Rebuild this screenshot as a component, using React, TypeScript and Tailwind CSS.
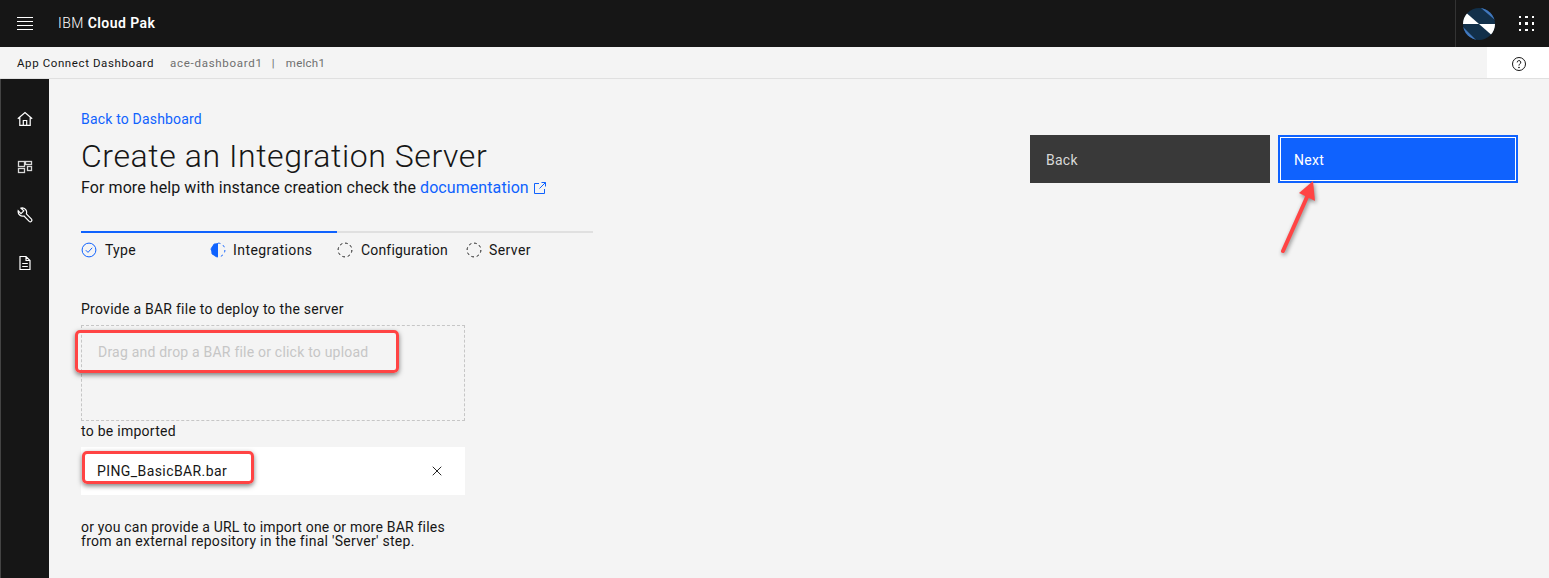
import React from "react";
import { X as XIcon } from "lucide-react";

const font = { fontFamily: "Roboto, sans-serif" };

const HomeIcon = () => (
  <svg width="16" height="16" viewBox="0 0 16 16" fill="none" stroke="white" strokeWidth="1.2">
    <path d="M0.8 7.8 8 1.5l7.2 6.3M2.8 6.4v8h10.4v-8M6.3 14.4V9.5h3.4v4.9" />
  </svg>
);

const DashIcon = () => (
  <svg width="16" height="16" viewBox="0 0 16 16" fill="none" stroke="#d8d8d8" strokeWidth="1.3">
    <rect x="1.5" y="2.5" width="6" height="5" />
    <rect x="8.5" y="2.5" width="6" height="3" />
    <rect x="1.5" y="9.5" width="6" height="4" />
    <rect x="10.5" y="7.5" width="4" height="4" />
  </svg>
);

const WrenchIcon = () => (
  <svg width="16" height="16" viewBox="0 0 16 16" fill="none" stroke="white" strokeWidth="1.2">
    <path d="M5.5 0.8a4.6 4.6 0 0 0-1.5.3L6.8 3.8 4 6.6 1.2 3.8A4.6 4.6 0 0 0 7 9l5.2 5.4a1.6 1.6 0 0 0 2.3-2.2L9.4 6.8A4.6 4.6 0 0 0 5.5 0.8Z" />
  </svg>
);

const DocIcon = () => (
  <svg width="16" height="16" viewBox="0 0 16 16" fill="none" stroke="white" strokeWidth="1.2">
    <path d="M3 1.5h6l4 4v9H3zM9 1.5v4h4M5.2 8.5h5.6M5.2 11.5h5.6" />
  </svg>
);

const DashedCircle = () => (
  <svg width="16" height="16" viewBox="0 0 16 16" fill="none" stroke="#161616" strokeWidth="1">
    <circle cx="8" cy="8" r="6.9" strokeDasharray="2.6 2.8" />
  </svg>
);

const Logo = () => (
  <svg width="32" height="32" viewBox="0 0 32 32">
    <defs>
      <clipPath id="logoClip">
        <circle cx="16" cy="16" r="16" />
      </clipPath>
    </defs>
    <g clipPath="url(#logoClip)">
      <rect width="32" height="32" fill="#12304a" />
      <path d="M18 0h14v12z" fill="#4178be" />
      <path d="M0 19v13h13z" fill="#4178be" />
      <path d="M0 2 16 16H0z" fill="white" />
      <path d="M32 30 16 16H32z" fill="white" />
    </g>
  </svg>
);

const Step = ({ icon, label, className }: { icon: React.ReactNode; label: string; className: string }) => (
  <div className={`flex items-center ${className}`}>
    {icon}
    <span>{label}</span>
  </div>
);

export default function App() {
  return (
    <div className="flex h-[578px] flex-col overflow-hidden bg-[#f4f4f4] text-[14px] tracking-[0.26px] text-[#161616]" style={font}>
      <header className="flex h-[47px] items-center justify-between bg-[#161616] text-white">
        <div className="flex items-center">
          <div className="ml-[17px] flex w-[16px] flex-col gap-[3px]">
            <div className="h-px bg-white" />
            <div className="h-px bg-white" />
            <div className="h-px bg-white" />
            <div className="h-px bg-white" />
          </div>
          <span className="ml-[25px] text-[14px] font-light tracking-[0.45px]">
            IBM <span className="font-semibold">Cloud Pak</span>
          </span>
        </div>
        <div className="flex h-full items-center">
          <div className="flex h-full w-[40px] items-center justify-end border-l border-[#333333]">
            <Logo />
          </div>
          <div className="ml-[24px] mr-[15px] grid grid-cols-3 gap-[4px]">
            {[0, 1, 2, 3, 4, 5, 6, 7, 8].map((i) => (
              <div key={i} className="h-[2.5px] w-[2.5px] bg-white" />
            ))}
          </div>
        </div>
      </header>

      <div className="flex h-[32px] items-center justify-between border-b border-[#e0e0e0] bg-[#f4f4f4] pl-[17px] text-[11.5px]">
        <div className="flex items-center pt-[2px]">
          <span className="tracking-[0.6px]">App Connect Dashboard</span>
          <span className="ml-[16px] tracking-[0.73px] text-[#6f6f6f]">ace-dashboard1</span>
          <span className="ml-[9px] mr-[11px] text-[#6f6f6f]">|</span>
          <span className="tracking-[0.25px] text-[#6f6f6f]">melch1</span>
        </div>
        <div className="flex h-full w-[62px] items-center justify-center bg-white">
          <svg className="ml-[2px] mt-[2px]" width="16" height="16" viewBox="0 0 16 16" fill="none" stroke="#161616" strokeWidth="1">
            <circle cx="8" cy="8" r="6.5" />
            <path d="M6.2 6.4a1.8 1.8 0 1 1 2.6 1.6c-.5.3-.8.6-.8 1.2v.4" />
            <circle cx="8" cy="11.5" r="0.4" fill="#161616" />
          </svg>
        </div>
      </div>

      <div className="flex min-h-0 flex-1">
        <aside className="flex w-[49px] shrink-0 flex-col items-center gap-[32px] border-l border-[#444444] bg-[#161616] pr-px pt-[32px]">
          <HomeIcon />
          <DashIcon />
          <WrenchIcon />
          <DocIcon />
        </aside>

        <main className="flex flex-1 justify-between pl-[32px] pr-[31px] pt-[31px]">
          <div className="w-[512px]">
            <a className="block text-[14px] leading-[18px] tracking-[0.18px] text-[#0f62fe]">Back to Dashboard</a>
            <h1 className="mt-[8px] text-[32px] font-light leading-[40px] tracking-[0.58px]">Create an Integration Server</h1>
            <p className="mt-px text-[16px] leading-[22px] tracking-[0.08px]">
              For more help with instance creation check the{" "}
              <a className="inline-flex items-center gap-[4px] text-[#0f62fe]">
                documentation
                <svg width="14" height="14" viewBox="0 0 14 14" fill="none" stroke="#0f62fe" strokeWidth="1">
                  <path d="M6 2.5H1.5v10h10V8M8.5 1.5h4v4M12.5 1.5 6.5 7.5" />
                </svg>
              </a>
            </p>

            <div className="mt-[32px] flex h-[2px]">
              <div className="w-[256px] bg-[#0f62fe]" />
              <div className="flex-1 bg-[#e0e0e0]" />
            </div>

            <div className="mt-[8px] flex h-[18px] items-center">
              <Step
                className="w-[129px] gap-[8px]"
                label="Type"
                icon={
                  <svg width="16" height="16" viewBox="0 0 16 16" fill="none" stroke="#0f62fe" strokeWidth="1">
                    <circle cx="8" cy="8" r="6.9" />
                    <path d="M4.8 8.2 7 10.4l4.2-4.6" />
                  </svg>
                }
              />
              <Step
                className="w-[127px] gap-[7px] tracking-[0.42px]"
                label="Integrations"
                icon={
                  <svg width="16" height="16" viewBox="0 0 16 16" fill="none">
                    <path d="M8 1a7 7 0 0 0 0 14z" fill="#0f62fe" />
                    <circle cx="8" cy="8" r="6.9" stroke="#0f62fe" strokeDasharray="2.4 3" />
                  </svg>
                }
              />
              <Step className="w-[129px] gap-[8px] tracking-[0.18px]" label="Configuration" icon={<DashedCircle />} />
              <Step className="gap-[7px] tracking-[0.4px]" label="Server" icon={<DashedCircle />} />
            </div>

            <p className="mt-[41px] leading-[18px]">Provide a BAR file to deploy to the server</p>
            <div className="mt-[7px] h-[96px] w-[384px] border border-dashed border-[#c6c6c6] pl-[16px] pt-[17px] leading-[18px] tracking-[0.21px] text-[#c6c6c6]">
              Drag and drop a BAR file or click to upload
            </div>
            <p className="mt-px leading-[18px]">to be imported</p>
            <div className="mt-[7px] flex h-[48px] w-[384px] items-center justify-between bg-white pl-[16px] pr-[20px]">
              <span className="tracking-[0.41px]">PING_BasicBAR.bar</span>
              <XIcon size={16} strokeWidth={1.4} color="#161616" />
            </div>
            <p className="mt-[25px] w-[384px] leading-[14px]">
              <span className="block tracking-[0.2px]">or you can provide a URL to import one or more BAR files</span>
              <span className="block tracking-[0.28px]">from an external repository in the final 'Server' step.</span>
            </p>
          </div>

          <div className="-mt-px flex h-[48px] translate-y-[26px] gap-[8px] text-[14px]">
            <button className="w-[240px] bg-[#393939] pl-[16px] pt-[2px] text-left text-[#d8d8d8]">Back</button>
            <button className="w-[240px] border-2 border-[#0f62fe] bg-[#0f62fe] pl-[14px] pt-[2px] text-left text-white outline outline-1 -outline-offset-3 outline-white">
              Next
            </button>
          </div>
        </main>
      </div>

      {/* annotations drawn over the screenshot */}
      <div className="absolute left-[75px] top-[330px] h-[43px] w-[324px] rounded-[5px] border-[3px] border-[#ff4444] shadow-[0_2px_5px_rgba(0,0,0,0.5)]" />
      <div className="absolute left-[82px] top-[451px] h-[33px] w-[172px] rounded-[5px] border-[3px] border-[#ff4444] shadow-[0_2px_5px_rgba(0,0,0,0.5)]" />
      <svg className="absolute left-[1270px] top-[170px]" width="60" height="95" viewBox="0 0 60 95" fill="none">
        <g style={{ filter: "drop-shadow(1px 2px 2px rgba(0,0,0,0.45))" }}>
          <path d="M13 81 37 27" stroke="#ff4444" strokeWidth="4" strokeLinecap="round" />
          <path d="M43 11 29 23 45 31z" fill="#ff4444" />
        </g>
      </svg>
    </div>
  );
}
